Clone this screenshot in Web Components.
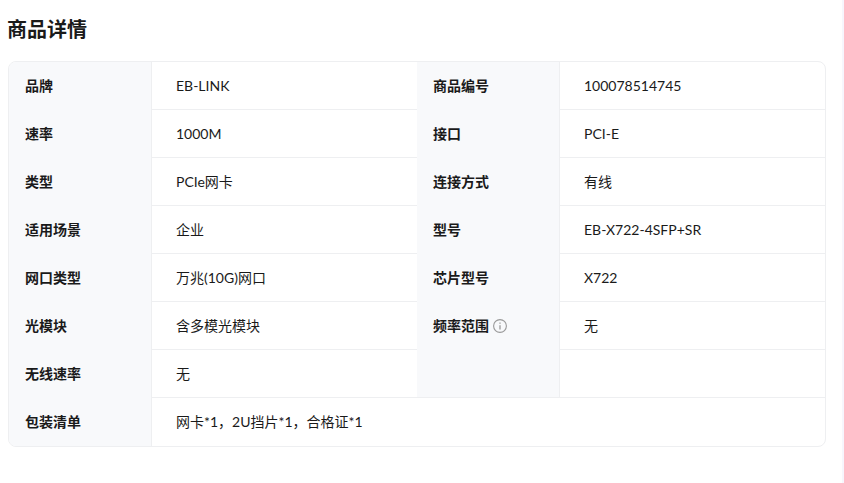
<!DOCTYPE html>
<html lang="zh-CN">
<head>
<meta charset="utf-8">
<title>商品详情</title>
<style>
html, body { margin: 0; height: 100%; background: #fff; overflow: hidden; }
body { font-family: "Lato", "Noto Sans CJK SC", sans-serif; color: #1a1a1a; }
</style>
</head>
<body>
<product-page>
    <spec-table heading="商品详情">
        <spec-row>
            <spec-cell label>品牌</spec-cell><spec-cell>EB-LINK</spec-cell>
            <spec-cell label>商品编号</spec-cell><spec-cell>100078514745</spec-cell>
        </spec-row>
        <spec-row>
            <spec-cell label>速率</spec-cell><spec-cell>1000M</spec-cell>
            <spec-cell label>接口</spec-cell><spec-cell>PCI-E</spec-cell>
        </spec-row>
        <spec-row>
            <spec-cell label>类型</spec-cell><spec-cell>PCIe网卡</spec-cell>
            <spec-cell label>连接方式</spec-cell><spec-cell>有线</spec-cell>
        </spec-row>
        <spec-row>
            <spec-cell label>适用场景</spec-cell><spec-cell>企业</spec-cell>
            <spec-cell label>型号</spec-cell><spec-cell>EB-X722-4SFP+SR</spec-cell>
        </spec-row>
        <spec-row>
            <spec-cell label>网口类型</spec-cell><spec-cell>万兆(10G)网口</spec-cell>
            <spec-cell label>芯片型号</spec-cell><spec-cell>X722</spec-cell>
        </spec-row>
        <spec-row>
            <spec-cell label>光模块</spec-cell><spec-cell>含多模光模块</spec-cell>
            <spec-cell label>频率范围 <info-icon></info-icon></spec-cell><spec-cell>无</spec-cell>
        </spec-row>
        <spec-row>
            <spec-cell label>无线速率</spec-cell><spec-cell>无</spec-cell>
            <spec-cell label filler></spec-cell><spec-cell></spec-cell>
        </spec-row>
        <spec-row wide last>
            <spec-cell label>包装清单</spec-cell><spec-cell>网卡*1，2U挡片*1，合格证*1</spec-cell>
        </spec-row>
    </spec-table>
</product-page>
<script>
customElements.define('product-page', class extends HTMLElement {
    constructor() {
        super();
        this.attachShadow({mode: 'open'}).innerHTML = `<style>
        :host { display: flex; height: 483px; box-sizing: border-box; }
        main { flex: 1; min-width: 0; padding: 0 16px 0 8px; }
        aside { width: 2px; background: #f7f6fd; }
        </style>
        <main><slot></slot></main><aside></aside>`;
    }
});

customElements.define('spec-table', class extends HTMLElement {
    constructor() {
        super();
        this.attachShadow({mode: 'open'}).innerHTML = `<style>
        :host { display: block; }
        h2 { margin: 0 0 0 -1px; height: 61px; box-sizing: border-box; padding-top: 15px; font-size: 20px; line-height: 28px; font-weight: 700; color: #1a1a1a; }
        div { border: 1px solid #eeeff1; border-radius: 8px; overflow: hidden; }
        </style>
        <h2></h2><div><slot></slot></div>`;
    }
    connectedCallback() {
        this.shadowRoot.querySelector('h2').textContent = this.getAttribute('heading');
    }
});

customElements.define('spec-row', class extends HTMLElement {
    constructor() {
        super();
        this.attachShadow({mode: 'open'}).innerHTML = `<style>
        :host { display: grid; grid-template-columns: 143px 265px 143px 1fr; height: 48px; }
        :host([wide]) { grid-template-columns: 143px 1fr; }
        </style><slot></slot>`;
    }
});

customElements.define('spec-cell', class extends HTMLElement {
    constructor() {
        super();
        this.attachShadow({mode: 'open'}).innerHTML = `<style>
        :host { display: flex; align-items: center; gap: 4px; box-sizing: border-box; height: 100%; padding: 0 24px 1px; font-size: 14px; color: #1a1a1a; border-bottom: 1px solid #eeeff1; }
        :host([label]) { padding: 0 16px 2px; font-weight: 700; background: #f8f9fb; border-bottom: 0; border-right: 1px solid #eeeff1; }
        :host([filler]) { border-bottom: 1px solid #eeeff1; }
        :host-context(spec-row[last]) { border-bottom: 0; padding-bottom: 2px; }
        </style><slot></slot>`;
    }
});

customElements.define('info-icon', class extends HTMLElement {
    constructor() {
        super();
        this.attachShadow({mode: 'open'}).innerHTML = `<style>
        :host { display: inline-flex; width: 14px; height: 14px; margin-top: 2px; }
        </style>
        <svg viewBox="0 0 14 14" width="14" height="14" fill="none" stroke="#999" stroke-width="1.1">
            <circle cx="7" cy="7" r="6.4"/>
            <path d="M7 6.2v4.3" stroke-width="1.3"/>
            <path d="M7 3.4v1.4" stroke-width="1.3"/>
        </svg>`;
    }
});
</script>
</body>
</html>
